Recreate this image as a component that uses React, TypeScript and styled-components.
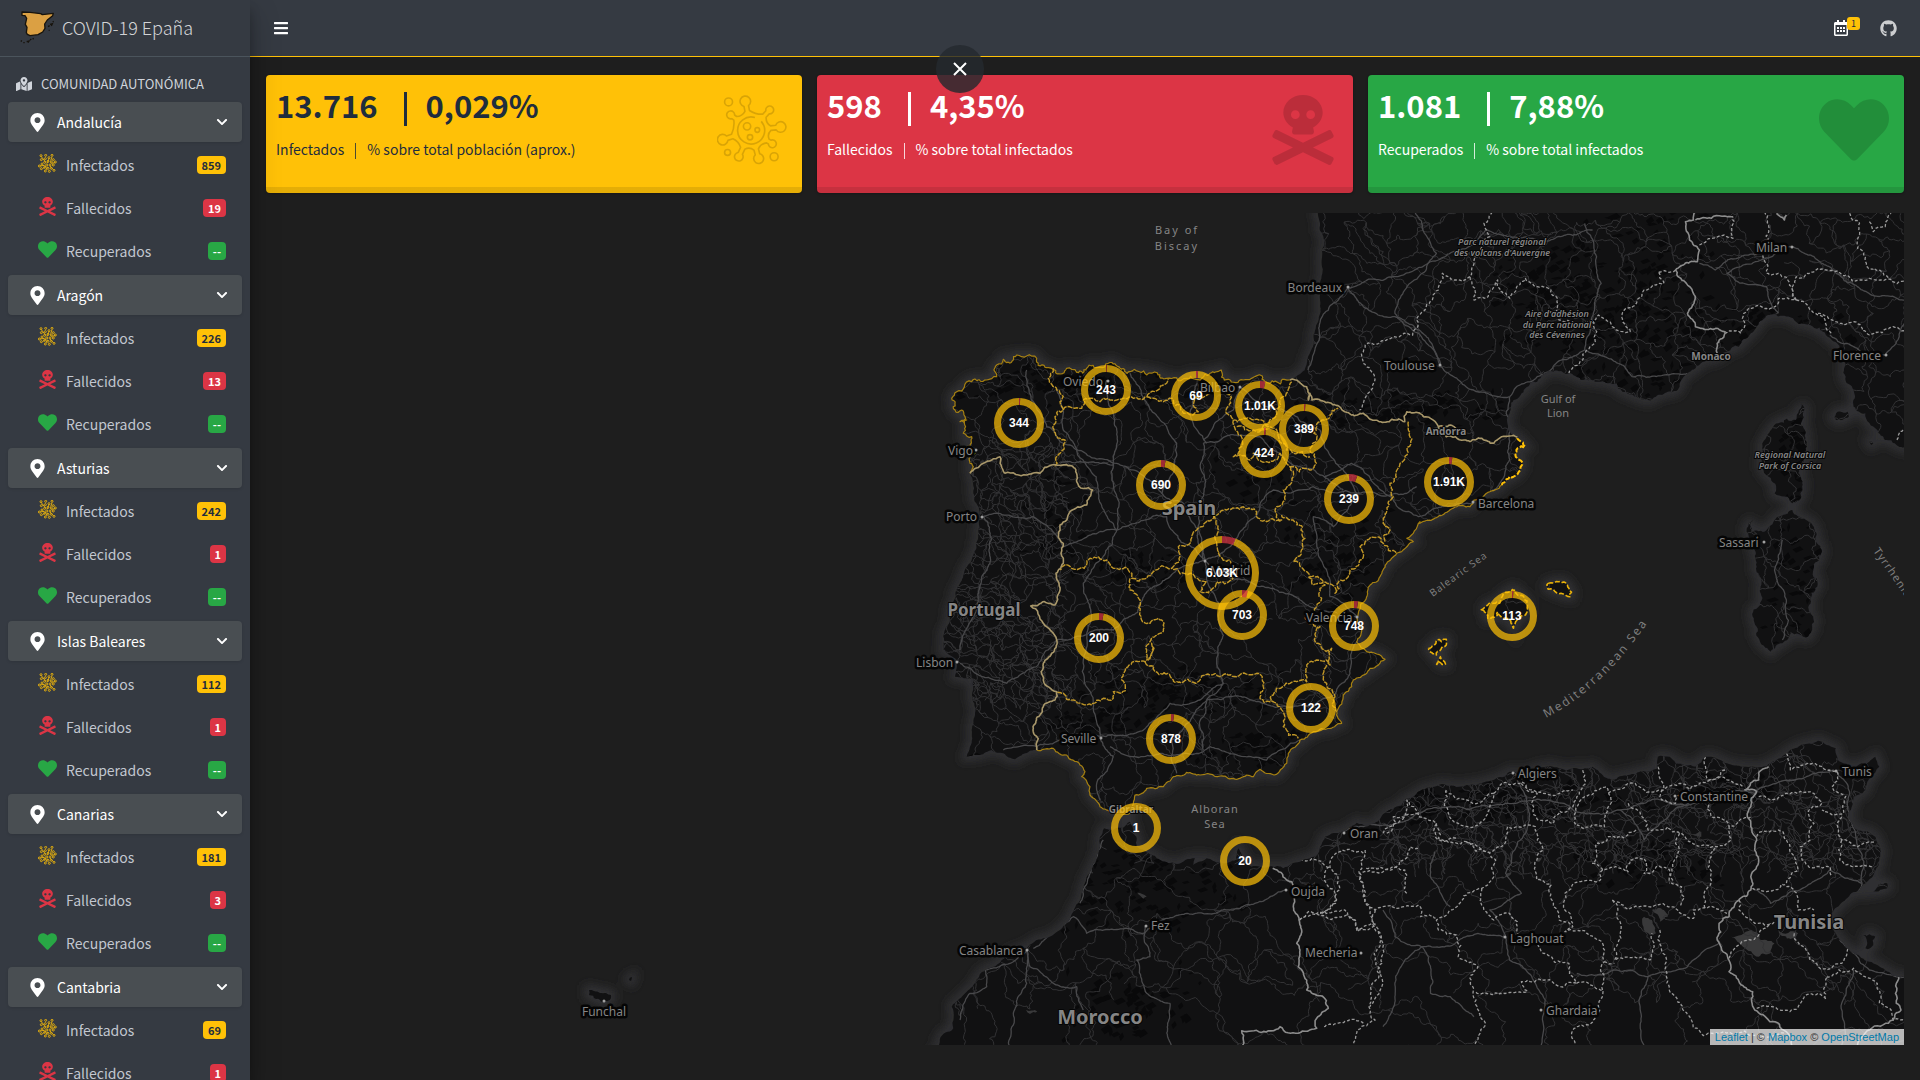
import React, { useState } from 'react';
import styled, { createGlobalStyle } from 'styled-components';
import {
  FaBars, FaChevronDown, FaGithub, FaHeart, FaMapMarkedAlt, FaMapMarkerAlt, FaRegCalendarAlt, FaSkullCrossbones,
} from 'react-icons/fa';

/* ---------- theme ---------- */

const color = {
  page: '#1e1e1e',
  panel: '#353a42',
  active: '#494e52',
  line: '#4b545c',
  text: '#c2c7d0',
  warning: '#ffc107',
  danger: '#dc3545',
  success: '#28a745',
  ink: '#1f2d3d',
};
const sans = '"Noto Sans CJK JP", "Noto Sans", sans-serif';

const GlobalStyle = createGlobalStyle`
  *, *::before, *::after { box-sizing: border-box; }
  body { margin: 0; background: ${color.page}; font-family: ${sans}; font-size: 14px; line-height: 21px; }
  button { font: inherit; border: 0; padding: 0; background: none; cursor: pointer; }
  a { color: inherit; text-decoration: none; }
  svg { display: block; flex: none; }
`;

type Tone = 'warning' | 'danger' | 'success';
const onTone = (t: Tone) => (t === 'warning' ? color.ink : '#fff');

/* ---------- layout ---------- */

const Page = styled.div`
  display: flex;
  height: 100vh;
  overflow: hidden;
`;

const Sidebar = styled.aside`
  flex: none;
  width: 250px;
  z-index: 2;
  overflow: hidden;
  background: ${color.panel};
  color: ${color.text};
  box-shadow: 0 14px 28px rgba(0, 0, 0, 0.25), 0 10px 10px rgba(0, 0, 0, 0.22);
`;

const Brand = styled.a`
  display: flex;
  align-items: center;
  gap: 8px;
  height: 57px;
  padding: 0 20px 2px;
  border-bottom: 1px solid ${color.line};
  font-size: 18px;
  font-weight: 300;
  color: rgba(255, 255, 255, 0.8);
  white-space: nowrap;
`;

const SideTitle = styled.h2`
  display: flex;
  align-items: center;
  gap: 9px;
  margin: 0;
  padding: 16px 16px 8px;
  font-size: 13px;
  font-weight: 400;
  line-height: 21px;
  color: #d0d4db;
`;

const Group = styled.section`
  padding: 0 8px;
  margin-bottom: 4px;
`;

const GroupButton = styled.button`
  display: flex;
  align-items: center;
  gap: 10px;
  width: 100%;
  height: 40px;
  padding: 0 14px 0 20px;
  border-radius: 4px;
  background: ${color.active};
  color: #fff;
  box-shadow: 0 1px 3px rgba(0, 0, 0, 0.12);
  text-align: left;
`;

const GroupName = styled.span`
  flex: 1;
`;

const StatList = styled.ul`
  margin: 3px 0 0;
  padding: 0;
  list-style: none;
  display: grid;
  gap: 3px;
`;

const StatLink = styled.a`
  display: flex;
  align-items: center;
  height: 40px;
  padding: 0 16px 0 30px;
`;

const StatIcon = styled.span<{ $tone: Tone }>`
  display: flex;
  justify-content: center;
  width: 19px;
  margin-right: 9px;
  padding-bottom: 3px;
  color: ${(p) => color[p.$tone]};
`;

const StatName = styled.span`
  flex: 1;
`;

const Badge = styled.span<{ $tone: Tone }>`
  padding: 0 5px;
  border-radius: 4px;
  background: ${(p) => color[p.$tone]};
  color: ${(p) => onTone(p.$tone)};
  font-size: 11px;
  font-weight: 700;
  line-height: 18px;
`;

const Main = styled.div`
  flex: 1;
  min-width: 0;
  display: flex;
  flex-direction: column;
`;

const Navbar = styled.header`
  display: flex;
  align-items: center;
  gap: 31px;
  height: 57px;
  padding: 0 23px 0 23px;
  background: ${color.panel};
  border-bottom: 1px solid ${color.warning};
`;

const IconButton = styled.button`
  position: relative;
  color: #fff;
`;

const IconLink = styled.a`
  color: rgba(255, 255, 255, 0.75);
`;

const Spacer = styled.div`
  flex: 1;
`;

const Notice = styled.span`
  position: absolute;
  top: -3px;
  left: 14px;
  width: 13px;
  border-radius: 3px;
  background: ${color.warning};
  color: ${color.ink};
  font-size: 9px;
  line-height: 13px;
  text-align: center;
`;

const CloseButton = styled.button`
  position: absolute;
  z-index: 3;
  top: 45px;
  left: 50%;
  width: 48px;
  height: 48px;
  margin-left: -24px;
  border-radius: 50%;
  background: rgba(36, 41, 46, 0.82);
  display: grid;
  place-items: center;
`;

const Content = styled.main`
  flex: 1;
  min-height: 0;
  display: flex;
  flex-direction: column;
  gap: 20px;
  padding: 18px 16px 35px;
`;

const Cards = styled.div`
  display: grid;
  grid-template-columns: repeat(3, 1fr);
  gap: 15px;
`;

const Card = styled.section<{ $tone: Tone }>`
  display: flex;
  justify-content: space-between;
  height: 118px;
  padding: 9px 15px 0 10px;
  border-radius: 4px;
  background: linear-gradient(to top, rgba(0, 0, 0, 0.1) 6px, transparent 6px) ${(p) => color[p.$tone]};
  color: ${(p) => onTone(p.$tone)};
  box-shadow: 0 0 1px rgba(0, 0, 0, 0.13), 0 1px 3px rgba(0, 0, 0, 0.2);
`;

const Figures = styled.h3`
  display: flex;
  gap: 19px;
  margin: 0 0 13px;
  font-size: 31px;
  font-weight: 700;
  line-height: 42px;
`;

const Captions = styled.p`
  display: flex;
  gap: 8px;
  margin: 0;
`;

const Rule = styled.span<{ $big?: boolean }>`
  width: ${(p) => (p.$big ? 3 : 1)}px;
  height: ${(p) => (p.$big ? 34 : 16)}px;
  margin: ${(p) => (p.$big ? '8px 0 0 7px' : '4px 3px 0 3px')};
  background: currentColor;
  opacity: ${(p) => (p.$big ? 1 : 0.8)};
`;

const CardIcon = styled.span`
  margin-top: 11px;
  color: rgba(0, 0, 0, 0.15);

  svg { width: auto; }
`;

const MapBox = styled.div`
  position: relative;
  flex: 1;
  min-height: 0;
  overflow: hidden;
`;

const MapSvg = styled.svg`
  width: 100%;
  height: 100%;
  font-family: 'Noto Sans', sans-serif;
`;

const Attribution = styled.div`
  position: absolute;
  right: 0;
  bottom: 0;
  padding: 0 5px;
  background: rgba(255, 255, 255, 0.7);
  color: #333;
  font: 11px/16px 'Liberation Sans', Arial, sans-serif;

  a { color: #0078a8; }
`;

/* ---------- icons ---------- */

type Pt = [number, number];

const bulbs: [number, number, number][] = [
  [136, 65, 16], [210, 90, 12], [242, 142, 16], [218, 193, 12],
  [176, 237, 15], [116, 232, 13], [68, 180, 16], [91, 105, 12],
];

function virusOutline() {
  const cx = 153, cy = 152;
  const arms = bulbs.map(([x, y, r]) => {
    const d = Math.hypot(x - cx, y - cy);
    const ux = (x - cx) / d, uy = (y - cy) / d;
    const at = (dist: number, side: number): Pt => [cx + ux * dist - uy * side, cy + uy * dist + ux * side];
    return { r, rootIn: at(60, -7), neckIn: at(d - r * 0.85, -7), neckOut: at(d - r * 0.85, 7), rootOut: at(60, 7), ux, uy };
  });
  return arms.map((a, i) => {
    const b = arms[(i + 1) % arms.length];
    const mx = a.ux + b.ux, my = a.uy + b.uy, m = Math.hypot(mx, my);
    return `${i ? 'L' : 'M'}${a.rootIn} L${a.neckIn} A${a.r} ${a.r} 0 1 1 ${a.neckOut} L${a.rootOut} Q${cx + (mx / m) * 50} ${cy + (my / m) * 50} ${b.rootIn}`;
  }).join(' ') + 'Z';
}

const VirusIcon = () => (
  <svg width="70" height="70" viewBox="50 45 212 212" fill="none" stroke="currentColor" strokeWidth="5" strokeLinejoin="round">
    <path d={virusOutline()} />
    <path d="M165 113 A41 41 0 1 0 184 125" />
    <circle cx="141" cy="140" r="11" />
    <circle cx="172" cy="151" r="7" />
    <circle cx="150" cy="173" r="8" />
    <circle cx="85" cy="66" r="12" />
    <circle cx="82" cy="219" r="9" />
    <circle cx="223" cy="232" r="12" />
  </svg>
);

const germs: Pt[] = [
  [9, 5], [23, 4], [10, 17], [33, 11], [42, 4], [22, 14], [46, 17], [30, 22], [40, 24], [20, 25], [52, 24], [12, 30], [4, 36],
  [26, 33], [36, 33], [46, 33], [20, 40], [30, 43], [40, 43], [10, 44], [48, 49], [22, 51], [34, 52],
];

const VirusesIcon = () => (
  <svg width="19" height="19" viewBox="0 0 57 57" fill="none" stroke="currentColor" strokeWidth="3" opacity="0.85">
    {germs.map(([x, y]) => <circle key={`${x}-${y}`} cx={x} cy={y} r="3" />)}
    <path d="M10 8L24 26M33 14L28 28M52 26L40 28M6 36L20 34M14 44L24 36M46 47L36 36M24 48L28 38M42 8L38 20" />
  </svg>
);

const SpainLogo = () => (
  <svg width="34" height="34" viewBox="30 30 102 102">
    <path
      d="M36 36L60 37L92 41L97 44L130 40L128 47L112 60L104 72L105 85L98 96L84 104L60 107L52 103L49 98L51 82L46 73L50 55L45 47L36 46Z"
      fill="#dba043" stroke="#17130c" strokeWidth="4" strokeLinejoin="round"
    />
    <path d="M114 80l5-3M120 73l7-2-3 7M128 66l3-2M116 91l3 0M33 125l2-4M40 128l4 0M50 125l7-2-3 5M60 120l4-3M68 118l3-3" stroke="#17130c" strokeWidth="4" fill="none" />
  </svg>
);

/* ---------- map geometry ---------- */

/* Each letter opens a survey sheet: origin x, origin y, scale x, scale y. */
const sheets: Record<string, [number, number, number, number]> = {
  A: [900, 330, 1 / 3, 1 / 3],
  B: [900, 640, 1 / 3, 1 / 3],
  C: [1300, 210, 1 / 2.529, 1 / 3],
  D: [1300, 540, 1 / 2.529, 1 / 3],
  P: [0, 0, 1, 1],
};

function parse(src: string): Pt[] {
  let s = sheets.P;
  let x: number | null = null;
  const out: Pt[] = [];
  for (const t of src.split(/\s+/).filter(Boolean)) {
    if (sheets[t]) s = sheets[t];
    else if (x === null) x = Number(t);
    else {
      out.push([s[0] + x * s[2], s[1] + Number(t) * s[3]]);
      x = null;
    }
  }
  return out;
}

function random(seed: number) {
  let a = seed | 0;
  return () => {
    a = (a + 0x6d2b79f5) | 0;
    let t = Math.imul(a ^ (a >>> 15), 1 | a);
    t = (t + Math.imul(t ^ (t >>> 7), 61 | t)) ^ t;
    return ((t ^ (t >>> 14)) >>> 0) / 4294967296;
  };
}

function roughen(pts: Pt[], amount: number, step = 3): Pt[] {
  const rnd = random(Math.round(pts[0][0] * 31 + pts[0][1] * 17 + pts.length));
  const out: Pt[] = [pts[0]];
  const split = (a: Pt, b: Pt) => {
    const dx = b[0] - a[0], dy = b[1] - a[1];
    if (Math.hypot(dx, dy) < step) {
      out.push(b);
      return;
    }
    const k = (rnd() - 0.5) * amount;
    const m: Pt = [(a[0] + b[0]) / 2 - dy * k, (a[1] + b[1]) / 2 + dx * k];
    split(a, m);
    split(m, b);
  };
  for (let i = 1; i < pts.length; i++) split(pts[i - 1], pts[i]);
  return out;
}

const toPath = (pts: Pt[]) => 'M' + pts.map((p) => `${p[0].toFixed(1)} ${p[1].toFixed(1)}`).join('L');
const rough = (src: string, amount = 0.5) => roughen(parse(src), amount);

const coast = {
  aquitaine: rough('C 45 5 50 60 62 95 55 150 50 260 35 400 12 480 0 510 A 1215 120 1170 150', 0.15),
  north: rough('A 1170 150 1110 160 1055 145 1030 150 985 148 930 130 905 145 860 145 800 145 740 135 690 125 660 115 625 100 600 112 560 115 500 115 435 112 410 85 380 78 350 75 340 90 310 88 290 105 285 125 290 140 260 150 215 155 170 185 155 205 165 240 185 240 180 275 200 270 190 310 215 320 200 350 225 370 210 400 210 430', 0.7),
  portugal: rough('A 210 430 220 490 240 560 235 620 215 690 180 760 150 850 130 920 130 960 B 135 30 170 60 165 110 220 115 218 180 215 270 210 320 200 350 240 345 275 330 310 340 345 358 410 330', 0.2),
  south: rough('B 410 330 460 325 500 345 540 375 555 395 545 410 570 440 570 465 600 500 640 515 690 520 700 490 705 465 740 445 790 440 820 410 900 405 960 408 1040 405 1060 410 1080 388 1122 405 1160 370 1165 340 1200 300 1240 275 1290 265 1325 250 1310 215 1330 165 1355 140 1360 120 1400 100 1410 85 1455 58 1430 42 1400 35 1370 5 A 1385 900 1375 850 1400 800 1440 740 1490 670 1540 635 1520 625 1560 575 C 300 940 360 915 430 890 440 870 510 825', 0.3),
  costaBrava: rough('C 510 825 540 800 558 780 555 750 545 735 550 715 570 710 553 690 550 680'),
  riviera: rough('C 550 680 525 660 530 610 540 570 570 535 600 515 640 485 680 490 710 510 760 515 800 520 815 545 850 560 880 570 900 560 930 545 960 530 970 500 1000 475 1040 445 1080 425 1110 410 1140 370 1170 330 1200 312 1240 322 1290 345 1330 375 1365 415 1375 450 1380 500 1400 540 1400 590 1430 610 1460 660 1480 690 1535 715', 0.4),
};
const europe: Pt[] = [
  ...coast.aquitaine, ...coast.north, ...coast.portugal, ...coast.south, ...coast.costaBrava, ...coast.riviera,
  [1940, 440], [1940, 190], [1318, 190],
];
const africa: Pt[] = [
  ...rough('B 95 1245 160 1165 155 1100 200 1055 255 990 310 955 380 925 430 895 480 870 520 815 545 760 570 700 600 620 612 565 640 570 690 545 700 575 710 620 745 640 780 660 830 672 885 655 880 675 920 655 960 668 1010 660 1015 625 1030 670 1080 680 1150 685 1200 665 1255 640 1275 590 1330 575 1370 548 1400 560 D 200 840 270 775 340 740 440 735 490 720 530 695 560 700 600 685 650 682 700 685 740 680 790 720 830 705 905 685 905 650 935 650 950 670 1000 680 1025 650 1080 670 1120 680 1180 680 1215 655 1240 630 1310 602 1355 625 1360 660 1400 690 1420 670 1455 650 1465 680 1440 710 1430 750 1400 770 1385 820 1410 870 1455 890 1465 960 1430 1030 1415 1050 1350 1110 1340 1150 1365 1200 1400 1240 1440 1265 1480 1290 1560 1320', 0.25),
  [1940, 1080], [900, 1080],
];
const isles = [
  'C 1268 578 1275 600 1277 690 1280 740 1270 820 1245 880 1200 850 1185 800 1170 740 1180 680 1210 640 1255 630 1262 600 1268 578',
  'C 1245 900 1280 930 1305 990 1318 1030 D 1300 80 1308 140 1298 230 1285 290 1240 275 1220 310 1190 335 1165 310 1155 260 1165 160 1155 80 1150 30 C 1135 980 1135 940 1145 930 1140 965 1180 960 1220 915 1245 900',
  'P 589 990 594 991 600 993 606 993 611 995 611 998 603 1002 596 999 589 995 589 990',
  'P 629 980 632 977 631 981 629 980',
  'C 1350 620 1385 605 1388 620 1355 630 1350 620',
  'D 1425 1185 1455 1190 1450 1215 1430 1225 1425 1185',
  'D 1450 1055 1485 1030 1485 1045 1450 1055',
  'C 1440 695 1450 700 1445 705 1440 695',
].map((s) => rough(s, 0.45));
const balearics = [
  'D 457 210 475 195 490 190 505 190 530 155 545 150 550 165 575 195 570 225 540 265 515 235 500 215 475 235 457 210',
  'D 628 130 655 125 680 145 683 170 660 160 640 148 628 148 628 130',
  'D 325 325 345 300 370 298 370 315 345 345 328 335 325 325',
  'D 345 375 355 350 368 372 352 366 345 375',
].map((s) => rough(s, 0.5));

const frontiers = [
  'C 1000 5 995 30 975 35 985 90 1010 120 1005 155 950 180 965 210 1000 260 980 310 1000 350 1075 365 1055 400 1055 430',
  'C 1000 30 1040 25 1095 20', 'C 1205 10 1225 30 1230 15',
  'B 1118 685 1160 720 1185 740 1180 800 1197 840 1190 910 1200 930 1195 980 1220 1020 1220 1050 1285 1105 1250 1135 1250 1165 1140 1160 1025 1172 1035 1230',
  'D 1185 680 1160 700 1160 720 1125 750 1155 755 1140 800 1140 860 1155 900 1150 930 1160 960 1140 1010 1140 1050 1090 1110 1085 1130 1060 1150 1055 1200 1085 1295 1145 1355 1150 1410 1230 1475 1240 1530',
  'D 1518 1300 1508 1330 1508 1390 1520 1410 1500 1440 1410 1515',
].map((s) => toPath(rough(s, 0.35)));
const spanishFrontiers = [
  'A 210 430 250 400 300 380 315 430 380 435 420 430 455 405 525 415 530 455 578 480 560 525 510 545 480 585 490 640 490 700 468 730 480 780 465 825 392 828 430 880 470 930 B 455 40 430 70 430 120 470 155 465 180 430 200 400 265 410 330',
  'A 1170 150 1220 170 1225 210 C 25 550 30 570 100 590 130 615 160 610 200 635 265 635 270 605 330 625 350 650 370 680 415 690 430 695 460 685 490 700 510 680 550 682',
  'C 350 650 380 645 395 660 370 680',
].map((s) => toPath(rough(s, 0.35)));
const regions = [
  'A 460 115 445 145 470 180 490 200 480 215 490 240 465 260 462 305 495 330 480 370 465 410',
  'A 490 240 545 235 550 210 600 215 650 210 700 205 740 200 765 185 790 165 805 148',
  'A 740 200 790 215 815 205 850 250 895 245 880 225 930 190 940 165 985 160',
  'A 985 160 990 210 978 240 1000 270 1050 265 1100 285 1130 250 1150 200 1175 155',
  'A 1000 270 1000 380 1050 390 1060 370 1100 395 1140 370 1170 410 1230 420 1245 390 1230 360 1250 330 1250 290 1290 260 1315 235',
  'A 1010 290 1060 300 1130 300 1180 370 1230 380',
  'A 1170 410 1180 440 1150 480 1155 510 1130 530 1130 555 1145 570 1100 575 1070 545 1030 530 980 540 940 555 890 600 870 640 835 650 840 680 815 715 760 725 740 745 695 745 685 720 640 715 620 690 570 685 540 715 480 720',
  'A 940 555 955 600 950 640 990 690 995 750 950 755 900 785 920 755 870 730 815 715',
  'A 1145 555 1180 570 1215 625 1210 655 1180 695 1230 740 1270 755 1305 790 1345 740 1350 720 1380 690 1380 650 1400 630 1450 640 1490 670',
  'A 1525 275 1525 300 1500 400 1470 460 1480 500 1450 570 1455 635',
  'A 1225 740 1240 765 1275 765 1260 775 1250 830 1220 850 1225 880 1260 890 1250 940 1290 960 B 1295 25 1290 75 1280 60 1250 60 1220 75 1220 125 1190 125 1120 165 1110 185',
  'B 1280 75 1280 130 1300 200 1310 215',
  'A 690 745 690 780 720 810 715 830 750 880 785 870 780 910 750 935 745 990 B 755 10 755 40 735 65 665 120 665 160 640 155 640 175 610 175 575 195 520 180 490 160 470 155',
  'B 735 65 830 125 900 120 960 110 1010 110 1070 100 1090 140 1080 175 1110 185 1150 215 1150 260 1195 295',
].map((s) => toPath(rough(s, 0.55)));
const provinces = [
  'C 485 5 465 40 480 80 430 200 440 270 470 265 500 210 530 265 570 205 600 230 635 240 650 300 655 330 740 330 745 400 715 450 680 490',
  'C 430 200 390 210 360 190 350 240 295 330 285 375 230 385 165 405 160 460 185 490 180 540 150 600',
  'C 950 180 905 185 920 220 870 240 820 300 835 365 790 350 755 315 740 340',
  'C 1175 5 1185 60 1170 130 1180 190 1210 190 1255 270 1210 265 1190 295 1135 295 1115 370 1075 370',
  'C 1255 270 1255 200 1330 180 1400 215 1440 205 1535 215', 'C 1255 270 1290 300 1345 375',
  'C 1310 310 1370 340 1440 375 1500 350 1535 365', 'C 1390 10 1415 40 1410 115 1490 205',
  'C 1010 105 1095 85 1095 20', 'C 1440 35 1450 65 1480 50 1495 10', 'C 1510 690 1525 660',
  'D 210 880 245 850 270 780 290 800 300 830 345 850 345 895 400 895',
  'D 370 750 375 820 400 850 455 850 480 800 490 760 370 755',
  'D 490 760 560 725 600 760 590 820 640 850 690 800 700 770 715 690',
  'D 700 855 770 860 780 800 775 740 720 770 700 800 700 855', 'D 560 730 590 750 690 750',
  'D 780 760 830 730 960 730 985 750', 'D 905 680 920 740 915 780 950 790 985 750 1040 720 1075 690',
  'D 1025 650 1035 720 1100 730 1120 740',
  'D 830 790 865 830 880 870 930 860 960 880 1050 920 1090 900 1085 860 1140 830', 'D 1030 780 1040 830 1085 860',
  'D 345 850 350 895 420 905 480 940 495 960 490 1010 460 1045 380 1110 345 1140 350 1170 395 1185 400 1250 450 1280 430 1310 445 1380 450 1530',
  'D 420 905 510 920 525 860 595 860 600 900 615 930 595 980 600 1020 635 1035 640 1100 690 1160 670 1175 770 1230 770 1265 795 1270',
  'D 160 940 90 940 75 970 100 1050 90 1090 55 1120', 'D 165 930 150 1000 160 1060 190 1110 245 1105 300 1095 305 1130 345 1135',
  'D 190 1110 205 1195 190 1260 180 1350 190 1440 145 1470 140 1530', 'D 270 1060 265 990 165 985',
  'D 0 1140 60 1115 120 1115 145 1175 190 1150',
  'D 460 1045 465 1110 490 1140 530 1120 550 1180 590 1200 615 1240 680 1270 700 1330 765 1350 755 1420 700 1460 695 1530',
  'D 445 1357 575 1355 560 1325 620 1320 700 1330', 'D 765 1350 760 1290 770 1265',
  'D 850 870 780 890 750 910 740 970 765 990 830 995 835 960 870 955 870 1000 935 990 940 1030 965 1040 960 1100',
  'D 765 990 760 1020 670 1060 670 1110 690 1150', 'D 790 1080 800 1130 795 1260 885 1260 890 1180',
  'D 790 1080 880 1100 955 1110 995 1135 995 1110 1080 1120', 'D 960 880 950 910 940 1000 935 1030',
  'D 1050 925 1035 960 1040 1000 1025 1050 1025 1105', 'D 910 1170 925 1280 950 1370 1020 1487 1230 1475',
  'D 1155 890 1210 870 1230 900 1250 950 1260 990 1230 1030 1180 1055 1145 1045',
  'D 1160 770 1230 760 1300 760 1320 790 1285 820 1300 850 1290 900 1265 920 1270 960 1340 980 1345 1010',
  'D 1230 640 1240 690 1330 690 1360 700 1345 740 1380 770 1375 820 1320 810', 'D 1370 830 1370 900 1410 920 1455 905',
  'D 1370 900 1365 960 1400 980 1450 980', 'D 1110 1080 1110 1110 1150 1150 1200 1145',
  'D 1230 1040 1260 1080 1260 1110 1300 1110', 'D 1085 1255 1140 1200 1190 1150', 'D 1250 1180 1310 1280 1370 1270 1385 1220',
  'D 1155 1405 1310 1360 1330 1380 1330 1310 1400 1285 1460 1330 1465 1390 1495 1410 1500 1440 1530 1445',
  'B 1197 840 1250 820 1340 825 1375 870 1420 850 1440 890 1430 990 1410 1100', 'B 1200 660 1290 680 1310 780 1260 820',
  'B 1420 850 1390 770 1380 700 1490 680 1530 620 1560 625', 'B 1460 580 1480 530 1560 520', 'B 1390 1150 1310 1150 1270 1160',
].map((s) => toPath(rough(s, 0.4)));
const highways = [
  'A 915 690 800 560 650 600 490 300 470 180', 'A 915 690 850 520 785 490 650 400 440 290 380 120', 'A 785 490 830 340 800 290 690 130',
  'A 915 690 1000 640 1120 480 1240 470 1370 490 1550 470', 'A 915 690 1080 770 1230 830 1370 860', 'A 915 690 960 840 950 990 B 970 130 920 180 910 330',
  'A 915 690 760 770 640 900 470 930 B 320 130 180 70', 'A 910 340 1080 320 1200 410 1330 480', 'A 910 340 915 470 910 690',
  'A 480 400 640 405 650 300 620 150', 'A 650 600 490 650 400 560 250 560', 'A 250 560 270 700 220 860 180 960', 'A 640 400 650 600 550 760 550 990 B 580 190 600 290',
  'B 600 290 640 350 590 430 600 480', 'B 600 290 740 260 810 190 900 180 970 130', 'B 600 290 500 290 410 320 310 330', 'B 830 400 815 300 920 180 1090 190 1240 200', 'B 630 320 730 350 930 320 1100 360 1200 300',
  'A 920 340 870 250 890 160', 'A 1020 170 1150 240 1260 300 1370 490', 'A 1370 490 1300 590 1240 560 1250 640 1290 800 1370 860', 'A 910 330 1000 240 1020 170', 'B 1370 5 1350 100 1240 200',
  'C 120 235 160 290 240 320 340 420 355 465 420 530 530 560', 'C 355 465 320 400 240 310 345 130 290 5', 'C 120 235 20 480', 'C 120 235 240 200 350 150 470 60 740 60',
  'C 530 560 600 500 720 420 745 300 750 140 720 40', 'C 720 420 840 500 980 490', 'C 1245 110 1300 140 1530 270', 'C 1245 110 1080 190 1180 230 1210 310', 'C 1245 110 1170 130 1050 180 1010 160', 'C 1480 435 1400 410 1340 375', 'C 1480 435 1530 330',
  'C 435 880 300 920 130 760 60 800', 'C 435 880 500 830 530 660 530 560',
  'B 400 925 520 830 560 880 730 880 860 820 1000 810 1155 750', 'B 380 930 390 980 460 1030 530 1040 550 1110', 'B 380 930 380 1030 340 1120 330 1230', 'B 540 790 570 700 610 600', 'B 735 860 750 950 710 960 740 1060 810 1090 820 1230', 'B 180 1140 210 1060 260 1040 255 990 380 930',
  'D 110 880 240 850 300 820 380 800 540 790 620 780 810 810 1000 790 1150 760 1350 690', 'D 810 810 870 900 910 850 1040 770', 'D 340 935 330 1010 380 1100', 'D 545 700 570 880 520 1000 560 1060 480 1110 520 1190 530 1260 590 1320 620 1380 610 1515',
  'D 1355 690 1390 760 1390 840 1420 940 1420 1040 1350 1120', 'D 1420 1030 1340 990 1190 1090 1140 1045', 'D 1365 1200 1440 1290 1530 1310', 'D 210 1110 240 1190 310 1220 450 1180 520 1190', 'D 310 1220 330 1360 380 1370 440 1430', 'D 700 1300 800 1290 880 1310 980 1280 1060 1210', 'D 880 1310 860 1400 870 1515',
  'D 1220 0 1200 90 1230 180 1220 300', 'D 210 1460 240 1370 250 1290 310 1220', 'D 1400 1290 1370 1390 1370 1515',
].map((s) => toPath(rough(s, 0.22)));

/* Secondary roads: a jittered lattice, denser along the northern half of the map. */
function lattice(x0: number, y0: number, x1: number, y1: number, gap: number, seed: number) {
  const rnd = random(seed);
  const nx = Math.ceil((x1 - x0) / gap), ny = Math.ceil((y1 - y0) / gap);
  const grid: Pt[][] = [];
  for (let j = 0; j <= ny; j++) {
    grid.push([]);
    for (let i = 0; i <= nx; i++) grid[j].push([x0 + (i + rnd() * 1.1) * gap, y0 + (j + rnd() * 1.1) * gap]);
  }
  let d = '';
  for (let j = 0; j < ny; j++) {
    for (let i = 0; i < nx; i++) {
      const p = grid[j][i];
      const links: Pt[] = [];
      if (rnd() < 0.75) links.push(grid[j][i + 1]);
      if (rnd() < 0.75) links.push(grid[j + 1][i]);
      if (rnd() < 0.3) links.push(grid[j + 1][i + 1]);
      links.forEach((q) => { d += toPath(roughen([p, q], 0.55, 4)); });
    }
  }
  return d;
}
const minorRoads = [
  lattice(900, 200, 1920, 860, 22, 7),
  lattice(940, 440, 1060, 700, 10, 23),
  lattice(1370, 750, 1900, 860, 14, 11),
  lattice(900, 800, 1920, 960, 36, 5),
  lattice(900, 950, 1920, 1060, 62, 3),
];

function relief() {
  const rnd = random(99);
  const zones: [number, number, number, number, number][] = [
    [1180, 690, 90, 20, 90], [1060, 385, 120, 20, 120], [1400, 410, 110, 16, 110], [1130, 570, 60, 14, 60], [1250, 750, 70, 20, 80],
    [1640, 320, 60, 100, 200], [1540, 300, 60, 60, 110], [1760, 330, 80, 20, 70], [1130, 890, 90, 40, 110], [1500, 800, 160, 20, 140],
    [1130, 1000, 60, 40, 70], [1650, 860, 70, 26, 90], [1340, 560, 50, 50, 80], [1790, 460, 14, 40, 40], [1790, 590, 24, 60, 50],
    [960, 760, 30, 8, 14], [1050, 510, 30, 50, 40], [1730, 790, 50, 14, 50], [1100, 720, 60, 12, 50], [1255, 470, 40, 30, 40],
  ];
  let d = '';
  zones.forEach(([cx, cy, rx, ry, n]) => {
    for (let i = 0; i < n; i++) {
      const x = cx + (rnd() + rnd() - 1) * rx * 1.3, y = cy + (rnd() + rnd() - 1) * ry * 1.3;
      const w = 2 + rnd() * 7, h = 1 + rnd() * 4;
      d += `M${x.toFixed(1)} ${y.toFixed(1)}l${w.toFixed(1)} ${(-h).toFixed(1)}l${(w / 2).toFixed(1)} ${h.toFixed(1)}l${(-w).toFixed(1)} ${h.toFixed(1)}z`;
    }
  });
  return d;
}

const lakes = [
  'D 870 1130 890 1140 900 1180 885 1185 870 1130', 'D 890 1110 920 1110 930 1130 910 1145 890 1110',
  'D 1090 1190 1140 1170 1200 1210 1190 1240 1160 1250 1120 1220 1090 1190', 'D 1210 1170 1260 1180 1250 1195 1215 1185 1210 1170',
  'D 495 1015 535 995 520 1012 495 1015', 'D 580 975 612 950 605 965 580 975', 'D 70 915 115 905 105 912 70 915', 'D 995 885 1015 875 1015 890 995 885',
  'B 712 758 740 770 730 776 712 758', 'B 378 1110 412 1115 390 1122 378 1110',
].map((s) => toPath(rough(s, 0.4)));

const land = [europe, africa, ...isles, ...balearics].map((p) => toPath(p) + 'Z').join('');

/* ---------- map data ---------- */

type Kind = 'city' | 'state' | 'micro' | 'park' | 'sea' | 'strait' | 'gulf' | 'country';
type Anchor = 'start' | 'middle' | 'end';
const labelStyle: Record<Kind, React.SVGProps<SVGTextElement>> = {
  city: { fontSize: 12, strokeWidth: 5 },
  state: { fontSize: 20, fontWeight: 700, strokeWidth: 2 },
  country: { fontSize: 17, fontWeight: 700, strokeWidth: 2 },
  micro: { fontSize: 10, fontWeight: 700, strokeWidth: 2 },
  park: { fontSize: 9, fontWeight: 600, fontStyle: 'italic', strokeWidth: 2 },
  sea: { fontSize: 11, letterSpacing: 2, strokeWidth: 0 },
  strait: { fontSize: 11, letterSpacing: 1, strokeWidth: 0 },
  gulf: { fontSize: 11, strokeWidth: 0 },
};
const labels: [string, number, number, Kind, Anchor][] = [
  ['Bay of', 1177, 234, 'sea', 'middle'], ['Biscay', 1177, 250, 'sea', 'middle'],
  ['Alboran', 1215, 813, 'strait', 'middle'], ['Sea', 1215, 828, 'strait', 'middle'],
  ['Gulf of', 1558, 403, 'gulf', 'middle'], ['Lion', 1558, 417, 'gulf', 'middle'],
  ['Bordeaux', 1342, 292, 'city', 'end'], ['Toulouse', 1384, 370, 'city', 'start'], ['Vigo', 948, 455, 'city', 'start'],
  ['Porto', 946, 521, 'city', 'start'], ['Lisbon', 916, 667, 'city', 'start'], ['Seville', 1061, 743, 'city', 'start'],
  ['Oran', 1350, 838, 'city', 'start'], ['Oujda', 1291, 896, 'city', 'start'], ['Fez', 1151, 930, 'city', 'start'],
  ['Casablanca', 959, 955, 'city', 'start'], ['Mecheria', 1305, 957, 'city', 'start'], ['Oviedo', 1063, 386, 'city', 'start'],
  ['Bilbao', 1200, 392, 'city', 'start'], ['Madrid', 1210, 575, 'city', 'start'], ['Valencia', 1306, 622, 'city', 'start'],
  ['Barcelona', 1478, 508, 'city', 'start'], ['Milan', 1756, 252, 'city', 'start'], ['Florence', 1833, 360, 'city', 'start'],
  ['Sassari', 1719, 547, 'city', 'start'], ['Algiers', 1518, 778, 'city', 'start'], ['Constantine', 1680, 801, 'city', 'start'],
  ['Tunis', 1842, 776, 'city', 'start'], ['Laghouat', 1510, 943, 'city', 'start'], ['Ghardaia', 1546, 1015, 'city', 'start'],
  ['Funchal', 604, 1016, 'city', 'middle'],
  ['Spain', 1189, 515, 'state', 'middle'], ['Portugal', 984, 616, 'country', 'middle'],
  ['Morocco', 1100, 1024, 'state', 'middle'], ['Tunisia', 1809, 929, 'state', 'middle'],
  ['Gibraltar', 1131, 813, 'micro', 'middle'], ['Andorra', 1446, 435, 'micro', 'middle'], ['Monaco', 1711, 360, 'micro', 'middle'],
  ['Parc naturel régional', 1502, 245, 'park', 'middle'], ["des volcans d'Auvergne", 1502, 256, 'park', 'middle'],
  ["Aire d'adhésion", 1557, 317, 'park', 'middle'], ['du Parc national', 1557, 328, 'park', 'middle'], ['des Cévennes', 1557, 338, 'park', 'middle'],
  ['Regional Natural', 1790, 458, 'park', 'middle'], ['Park of Corsica', 1790, 469, 'park', 'middle'],
];
const towns: Pt[] = [
  [1348, 287], [1440, 365], [976, 450], [982, 517], [957, 662], [1101, 738], [1344, 833], [1286, 890], [1146, 926], [1027, 950],
  [1361, 953], [1108, 381], [1240, 387], [1205, 561], [1357, 617], [1473, 502], [1792, 247], [1886, 355], [1764, 542],
  [1513, 773], [1675, 796], [1836, 771], [1505, 937], [1541, 1010], [604, 1001],
];

/* label, x, y, share of deaths, outer radius */
const markers: [string, number, number, number, number?][] = [
  ['344', 1019, 423, 0.008], ['243', 1106, 390, 0.005], ['69', 1196, 396, 0.014], ['1.01K', 1260, 406, 0.035], ['389', 1304, 429, 0.009],
  ['424', 1264, 453, 0.012], ['690', 1161, 485, 0.03], ['239', 1349, 499, 0.054], ['1.91K', 1449, 482, 0.022], ['6.03K', 1222, 573, 0.06, 37],
  ['703', 1242, 615, 0.038], ['200', 1099, 638, 0.03], ['748', 1354, 626, 0.027], ['113', 1512, 616, 0.009], ['122', 1311, 708, 0],
  ['878', 1171, 739, 0.02], ['1', 1136, 828, 0], ['20', 1245, 861, 0],
];

const Marker = ({ m: [label, x, y, share, outer = 25] }: { m: (typeof markers)[number] }) => {
  const r = outer - 3.5;
  const c = 2 * Math.PI * r;
  return (
    <g transform={`translate(${x} ${y})`}>
      <g fill="none" strokeWidth="7" opacity="0.7" transform="rotate(-90)">
        <circle r={r} stroke={color.warning} strokeDasharray={`0 ${share * c} ${c}`} />
        {share > 0 && <circle r={r} stroke={color.danger} strokeDasharray={`${share * c} ${c}`} />}
      </g>
      <text y="4" textAnchor="middle" fill="#fff" fontSize="12" fontWeight="700" fontFamily="'Liberation Sans', Arial, sans-serif">{label}</text>
    </g>
  );
};

const CovidMap = () => (
  <MapSvg viewBox="266 213 1638 832" preserveAspectRatio="xMidYMid slice" role="img" aria-label="Mapa de casos por comunidad autónoma">
    <defs>
      <clipPath id="land"><path d={land} /></clipPath>
      <filter id="glow" x="-5%" y="-5%" width="110%" height="110%"><feGaussianBlur stdDeviation="5" /></filter>
      <path id="balearic" d="M1433 597Q1463 575 1500 548" />
      <path id="mediterranean" d="M1546 718Q1612 684 1662 600" />
      <path id="tyrrhenian" d="M1873 551L1930 632" />
    </defs>
    <path d={land} fill="none" stroke="#333334" strokeWidth="10" filter="url(#glow)" />
    <path d={land} fill="#111112" />
    <g clipPath="url(#land)" fill="none" strokeLinejoin="round">
      <path d={relief()} fill="#09090a" />
      {lakes.map((d) => <path key={d} d={d} fill="#39393a" />)}
      {minorRoads.map((d, i) => <path key={i} d={d} stroke="#323234" />)}
      {highways.map((d) => <path key={d} d={d} stroke="#49494b" strokeWidth="1.3" />)}
      {provinces.map((d) => <path key={d} d={d} stroke="#999" strokeWidth="1.3" strokeDasharray="3 2" />)}
      {frontiers.map((d) => <path key={d} d={d} stroke="#8c8c8c" strokeWidth="1.6" />)}
    </g>
    <g fill="none" strokeLinejoin="round">
      {[coast.north, coast.south].map((p, i) => <path key={i} d={toPath(p)} stroke={color.warning} strokeWidth="1.2" opacity="0.6" />)}
      <path d={toPath(coast.costaBrava)} stroke={color.warning} strokeWidth="2" strokeDasharray="5 2" />
      {balearics.map((p, i) => <path key={i} d={toPath(p)} stroke={color.warning} strokeWidth="1.6" strokeDasharray="5 2" opacity="0.9" />)}
      {regions.map((d) => <path key={d} d={d} stroke="#d3a52a" strokeWidth="1.4" strokeDasharray="5 1" opacity="0.9" />)}
      {spanishFrontiers.map((d) => <path key={d} d={d} stroke="#a8976a" strokeWidth="1.6" />)}
    </g>
    <g fill="#858585" stroke="#050505" strokeLinejoin="round" style={{ paintOrder: 'stroke' }}>
      {towns.map(([x, y]) => <circle key={`${x}-${y}`} cx={x} cy={y} r="1.5" stroke="none" fill="#a0a0a0" />)}
      {labels.map(([text, x, y, kind, anchor]) => (
        <text key={text + y} x={x} y={y} textAnchor={anchor} {...labelStyle[kind]}>{text}</text>
      ))}
    </g>
    <g fill="#7d7d7d" fontSize="11">
      <text fontSize="10" letterSpacing="1"><textPath href="#balearic">Balearic Sea</textPath></text>
      <text fontSize="12" letterSpacing="2"><textPath href="#mediterranean">Mediterranean Sea</textPath></text>
      <text letterSpacing="1"><textPath href="#tyrrhenian">Tyrrhenian Sea</textPath></text>
    </g>
    {markers.map((m) => <Marker key={m[0]} m={m} />)}
  </MapSvg>
);

/* ---------- sidebar ---------- */

const communities: [string, string, string][] = [
  ['Andalucía', '859', '19'], ['Aragón', '226', '13'], ['Asturias', '242', '1'],
  ['Islas Baleares', '112', '1'], ['Canarias', '181', '3'], ['Cantabria', '69', '1'],
];

const Community = ({ name, infected, dead }: { name: string; infected: string; dead: string }) => {
  const [open, setOpen] = useState(true);
  const rows: [string, string, Tone, React.ReactNode][] = [
    ['Infectados', infected, 'warning', <VirusesIcon />],
    ['Fallecidos', dead, 'danger', <FaSkullCrossbones size={19} />],
    ['Recuperados', '--', 'success', <FaHeart size={19} />],
  ];
  return (
    <Group>
      <GroupButton type="button" aria-expanded={open} onClick={() => setOpen(!open)}>
        <FaMapMarkerAlt size={19} />
        <GroupName>{name}</GroupName>
        <FaChevronDown size={12} />
      </GroupButton>
      {open && (
        <StatList>
          {rows.map(([label, value, tone, icon]) => (
            <li key={label}>
              <StatLink href="#">
                <StatIcon $tone={tone}>{icon}</StatIcon>
                <StatName>{label}</StatName>
                <Badge $tone={tone}>{value}</Badge>
              </StatLink>
            </li>
          ))}
        </StatList>
      )}
    </Group>
  );
};

/* ---------- cards ---------- */

const SummaryCard = ({ tone, total, share, label, note, icon }: {
  tone: Tone; total: string; share: string; label: string; note: string; icon: React.ReactNode;
}) => (
  <Card $tone={tone}>
    <div>
      <Figures><span>{total}</span><Rule $big /><span>{share}</span></Figures>
      <Captions><span>{label}</span><Rule /><span>{note}</span></Captions>
    </div>
    <CardIcon>{icon}</CardIcon>
  </Card>
);

export default function App() {
  return (
    <Page>
      <GlobalStyle />
      <Sidebar>
        <Brand href="#"><SpainLogo />COVID-19 Epaña</Brand>
        <SideTitle><FaMapMarkedAlt size={16} />COMUNIDAD AUTONÓMICA</SideTitle>
        {communities.map(([name, infected, dead]) => (
          <Community key={name} name={name} infected={infected} dead={dead} />
        ))}
      </Sidebar>
      <Main>
        <Navbar>
          <IconButton type="button" aria-label="Menú"><FaBars size={16} /></IconButton>
          <Spacer />
          <IconButton type="button" aria-label="Fecha"><FaRegCalendarAlt size={16} /><Notice>1</Notice></IconButton>
          <IconLink href="#" aria-label="GitHub"><FaGithub size={17} /></IconLink>
        </Navbar>
        <Content>
          <Cards>
            <SummaryCard tone="warning" total="13.716" share="0,029%" label="Infectados" note="% sobre total población (aprox.)" icon={<VirusIcon />} />
            <SummaryCard tone="danger" total="598" share="4,35%" label="Fallecidos" note="% sobre total infectados" icon={<FaSkullCrossbones size={70} />} />
            <SummaryCard tone="success" total="1.081" share="7,88%" label="Recuperados" note="% sobre total infectados" icon={<FaHeart size={70} />} />
          </Cards>
          <MapBox>
            <CovidMap />
            <Attribution>
              <a href="#">Leaflet</a> | © <a href="#">Mapbox</a> © <a href="#">OpenStreetMap</a>
            </Attribution>
          </MapBox>
        </Content>
      </Main>
      <CloseButton type="button" aria-label="Cerrar">
        <svg width="14" height="14" viewBox="0 0 14 14" stroke="#fff" strokeWidth="2"><path d="M1 1L13 13M13 1L1 13" /></svg>
      </CloseButton>
    </Page>
  );
}
